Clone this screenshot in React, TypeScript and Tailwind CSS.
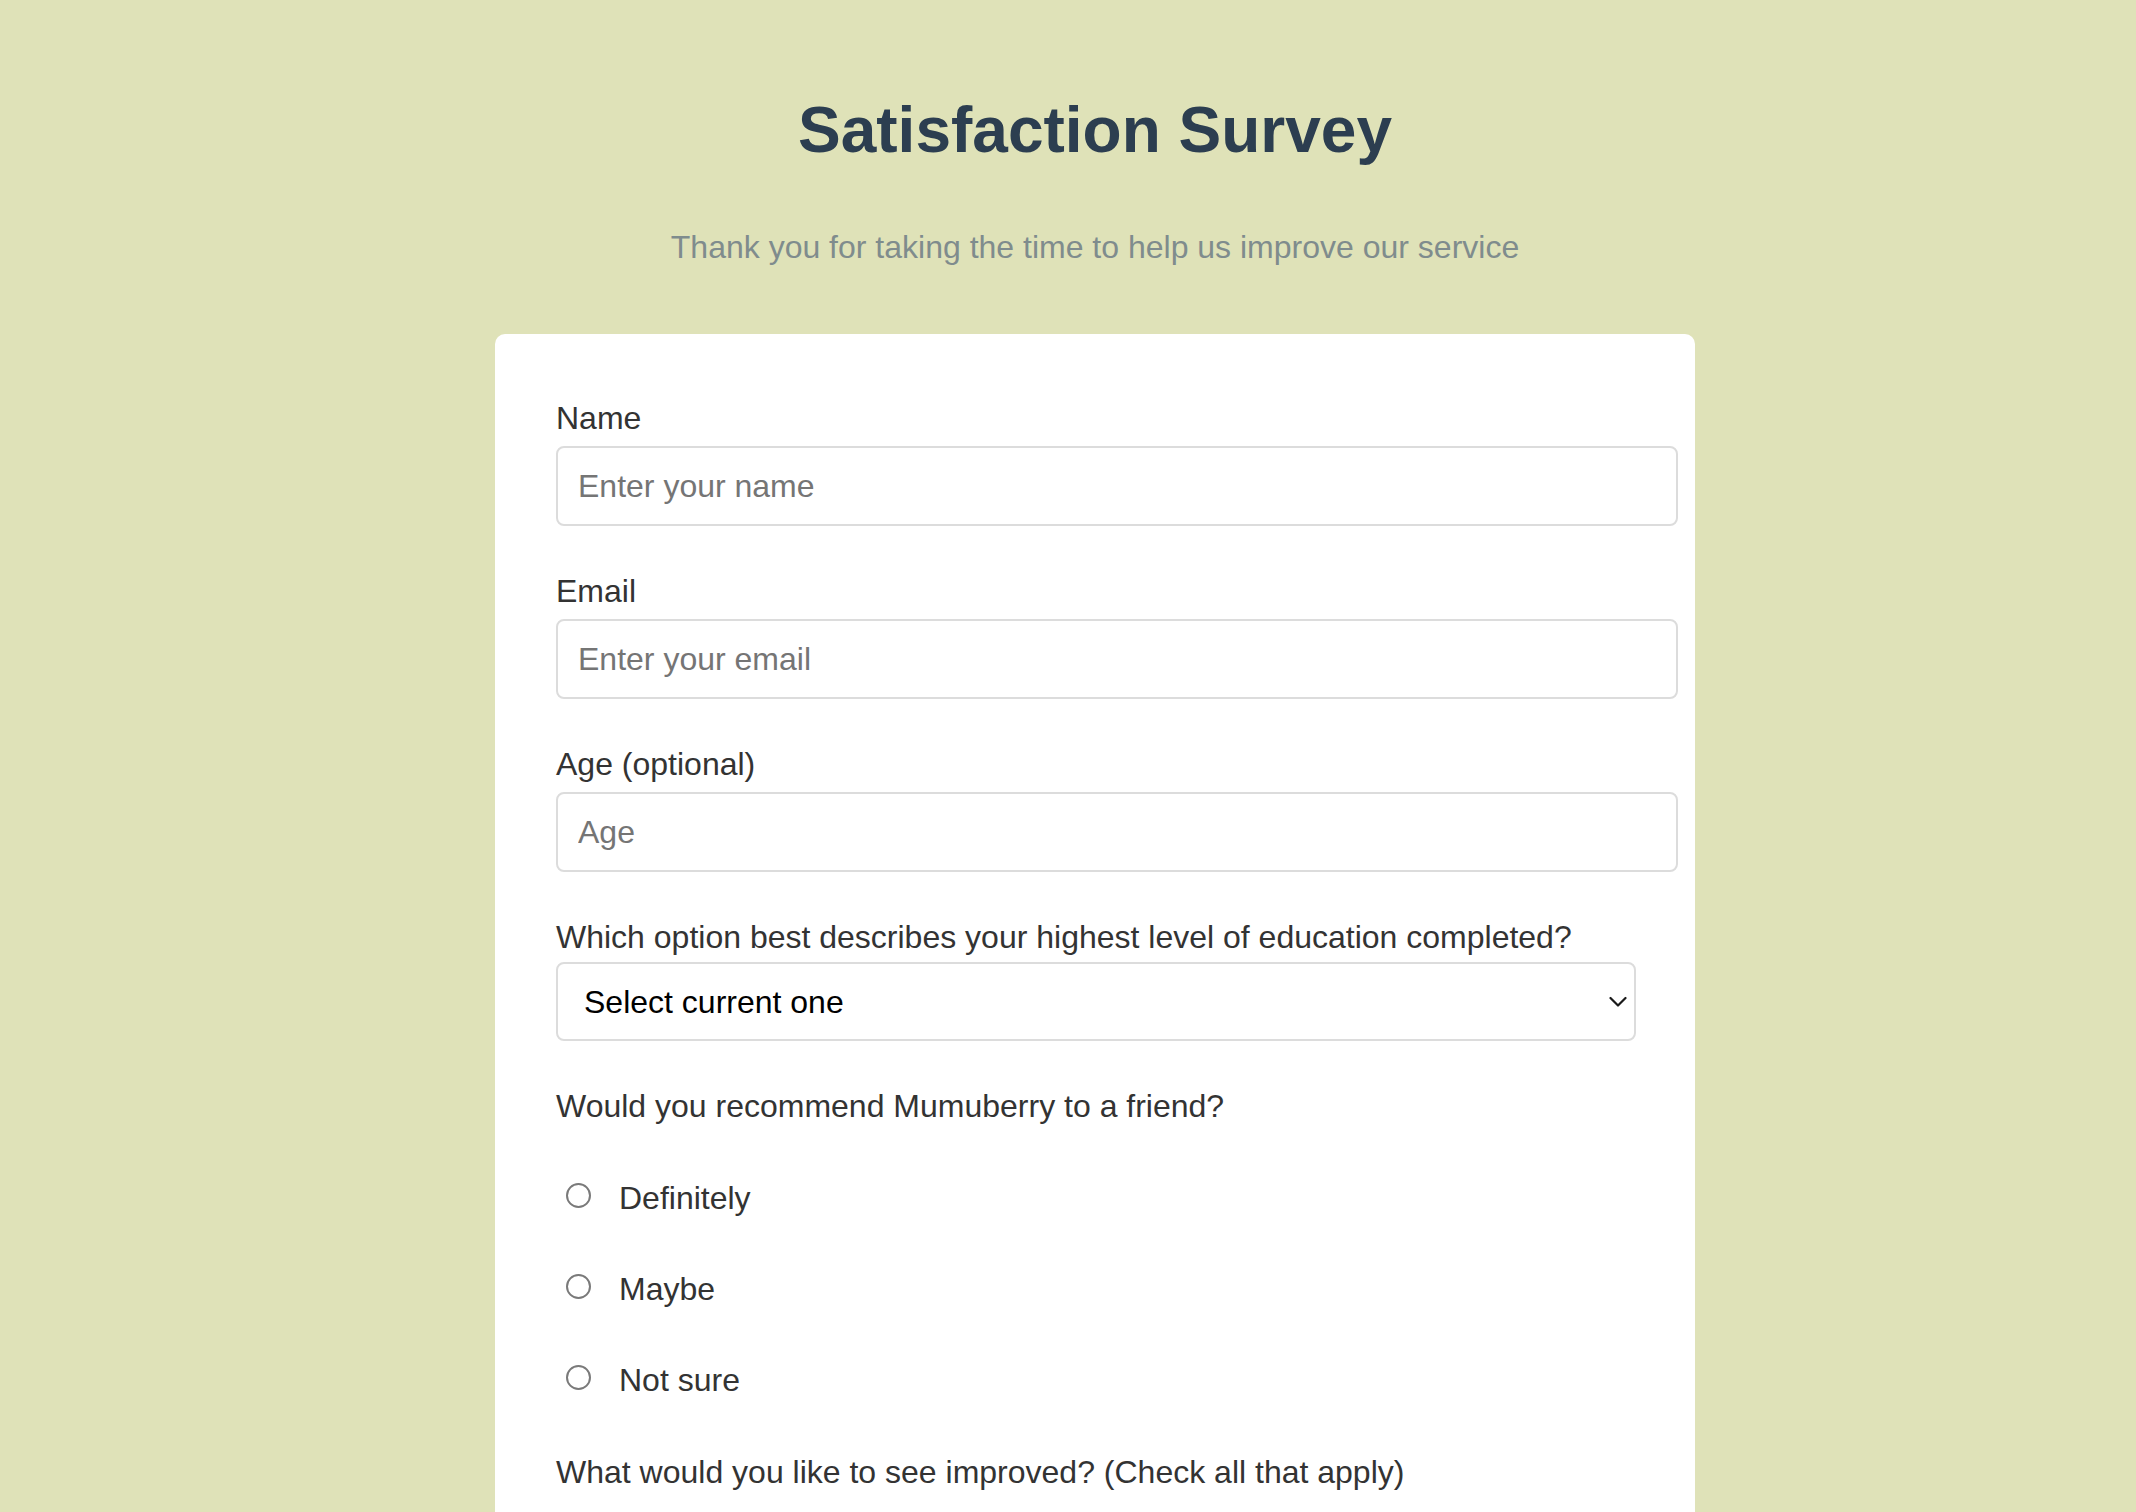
import { useState } from "react";

const FIELDS = [
  { id: "name", label: "Name", type: "text", placeholder: "Enter your name" },
  { id: "email", label: "Email", type: "email", placeholder: "Enter your email" },
  { id: "age", label: "Age (optional)", type: "number", placeholder: "Age" },
];

const RECOMMEND = ["Definitely", "Maybe", "Not sure"];

const IMPROVEMENTS = ["Front-end Projects", "Back-end Projects", "Data Visualization", "Challenges", "Open Source Community"];

export default function App() {
  const [recommend, setRecommend] = useState("");

  return (
    <div className="min-h-screen bg-[#dfe2b8] pl-[54px] pt-[93px] pb-[80px] font-['Liberation_Sans',Arial,sans-serif]">
      {/* Header */}
      <h1 className="text-center text-[64px] leading-[74px] font-bold text-[#2c3e50]">Satisfaction Survey</h1>
      <p className="mt-[62px] text-center text-[32px] leading-[37px] text-[#7f8c8d]">
        Thank you for taking the time to help us improve our service
      </p>

      {/* Card */}
      <form className="mx-auto mt-[68px] w-[1200px] rounded-[10px] bg-white pt-[66px] pb-[60px] pl-[61px] pr-[59px]">
        {FIELDS.map((f) => (
          <div key={f.id} className="mb-[47px]">
            <label htmlFor={f.id} className="mb-[9px] block text-[32px] leading-[37px] text-[#333333]">
              {f.label}
            </label>
            <input
              id={f.id}
              type={f.type}
              placeholder={f.placeholder}
              className="block h-[80px] w-[1122px] rounded-[8px] border-2 border-[#dcdcdc] bg-white px-[20px] text-[32px] leading-[37px] text-[#333333] placeholder-[#757575] outline-none"
            />
          </div>
        ))}

        {/* Education */}
        <div className="mb-[47px]">
          <label htmlFor="education" className="mb-[6px] block text-[32px] leading-[37px] text-[#333333]">
            Which option best describes your highest level of education completed?
          </label>
          <div className="relative w-[1080px]">
            <select
              id="education"
              defaultValue=""
              className="block h-[79px] w-full appearance-none rounded-[8px] border-2 border-[#dcdcdc] bg-white pl-[26px] text-[32px] text-black outline-none"
            >
              <option value="" disabled>
                Select current one
              </option>
              <option>High school</option>
              <option>Bachelor's degree</option>
              <option>Master's degree</option>
              <option>Doctorate</option>
            </select>
            <svg
              className="pointer-events-none absolute right-[9px] top-1/2 -translate-y-1/2"
              width="18"
              height="11"
              viewBox="0 0 18 11"
              fill="none"
            >
              <path d="M1.5 1.5 L9 9 L16.5 1.5" stroke="#1a1a1a" strokeWidth="2.2" strokeLinecap="round" strokeLinejoin="round" />
            </svg>
          </div>
        </div>

        {/* Recommend */}
        <p className="text-[32px] leading-[37px] text-[#333333]">Would you recommend Mumuberry to a friend?</p>
        <div className="mt-[55px] flex flex-col gap-[54px]">
          {RECOMMEND.map((r) => (
            <label key={r} className="flex items-start text-[32px] leading-[37px] text-[#333333]">
              <input
                type="radio"
                name="recommend"
                value={r}
                checked={recommend === r}
                onChange={() => setRecommend(r)}
                className="ml-[10px] mr-[28px] mt-[3px] h-[25px] w-[25px] shrink-0 appearance-none rounded-full border-2 border-[#7a7a7a] bg-white checked:border-[7px] checked:border-[#0b57d0]"
              />
              {r}
            </label>
          ))}
        </div>

        {/* Improvements */}
        <p className="mt-[55px] text-[32px] leading-[37px] text-[#333333]">What would you like to see improved? (Check all that apply)</p>
        <div className="mt-[55px] flex flex-col gap-[54px]">
          {IMPROVEMENTS.map((i) => (
            <label key={i} className="flex items-start text-[32px] leading-[37px] text-[#333333]">
              <input
                type="checkbox"
                className="ml-[10px] mr-[28px] mt-[5px] h-[25px] w-[25px] shrink-0 appearance-none rounded-[4px] border-2 border-[#7a7a7a] bg-white"
              />
              {i}
            </label>
          ))}
        </div>

        <p className="mt-[55px] mb-[9px] text-[32px] leading-[37px] text-[#333333]">Any comments or suggestions?</p>
        <textarea
          placeholder="Enter your comment here..."
          className="block h-[240px] w-[1122px] rounded-[8px] border-2 border-[#dcdcdc] px-[20px] py-[20px] text-[32px] text-[#333333] placeholder-[#757575] outline-none"
        />

        <button type="button" className="mt-[47px] h-[80px] w-[1080px] rounded-[8px] bg-[#2c3e50] text-[32px] text-white">
          Submit
        </button>
      </form>
    </div>
  );
}
